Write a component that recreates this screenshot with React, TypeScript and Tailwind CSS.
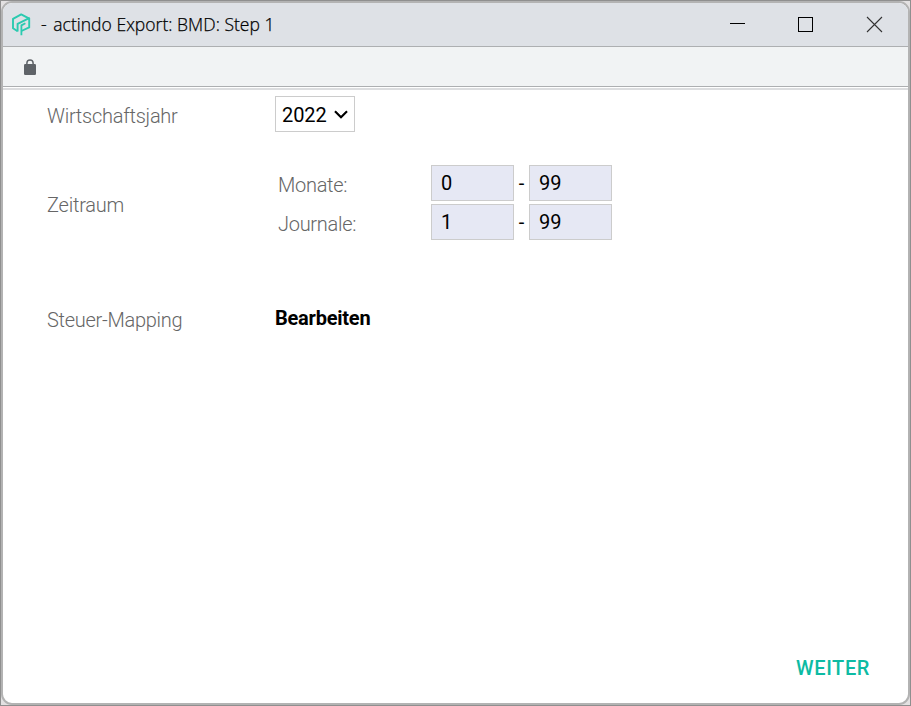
import React from "react";

function Logo() {
  return (
    <svg className="h-[24px] w-[20px] shrink-0" viewBox="0 0 20 24" fill="none" stroke="#2bcab0" strokeWidth="1.9" strokeLinejoin="round">
      <path d="M6.6 18.2 L2 15.2 V5.8 L10.2 1.4 L17.8 5.4" />
      <path d="M6.6 18.4 V10.8 L18.2 5.2 V14.4 L10.4 18" />
      <path d="M10.4 22.2 V12.4 L14.4 10.2" strokeWidth="1.8" />
    </svg>
  );
}

function TitleBar() {
  return (
    <div className="flex h-[44px] shrink-0 items-center border-b border-[#adafb1] bg-[#dee1e6] pl-[8px]">
      <Logo />
      <div className="ml-[10px] w-[260px] whitespace-nowrap font-['Open_Sans','Noto_Sans',sans-serif] text-[17.5px] font-light tracking-[0.03px] text-black [-webkit-text-stroke:0.25px_black]">
        <span className="mr-[2px]">-</span> actindo Export: BMD: Step 1
      </div>
      <svg className="ml-auto mr-[25px] h-[17px] w-[155px] shrink-0" viewBox="0 0 155 17" fill="none" shapeRendering="crispEdges">
        <path d="M2 7.5h15" stroke="#000" />
        <rect x="70.5" y="1.5" width="14" height="14" stroke="#000" />
        <path d="M139 1l15 15M154 1l-15 15" stroke="#333" strokeWidth="1.1" shapeRendering="auto" />
      </svg>
    </div>
  );
}

function LockBar() {
  return (
    <div className="flex h-[40px] shrink-0 items-center border-b border-[#adafb1] bg-[#f1f3f4] pl-[21px]">
      <svg className="h-[16px] w-[12px]" viewBox="0 0 12 16">
        <path d="M2.9 7V4a3.1 3.1 0 0 1 6.2 0v3" fill="none" stroke="#5f6368" strokeWidth="1.5" />
        <rect y="5" width="12" height="11" rx="1.3" fill="#5f6368" />
      </svg>
    </div>
  );
}

function Field({ value }: { value: string }) {
  return (
    <input
      className="h-[36px] w-[83px] border border-[#ccc] bg-[#e6e8f4] px-[9px] text-[20px] text-black outline-none"
      defaultValue={value}
    />
  );
}

function RangeRow({ label, from, to }: { label: string; from: string; to: string }) {
  return (
    <div className="flex h-[36px] items-center">
      <div className="w-[153px] pt-[4px] font-light tracking-[-0.28px] text-[#666]">{label}</div>
      <Field value={from} />
      <div className="w-[15px] pb-[1px] text-center text-black">-</div>
      <Field value={to} />
    </div>
  );
}

export default function App() {
  return (
    <div className="h-[706px] w-[911px] border border-[#8f8f8f] bg-[#e3e1e2]">
      <div className="flex h-[704px] flex-col overflow-hidden rounded-[11px] border-2 border-[#b3b3b3] bg-white">
        <TitleBar />
        <LockBar />
        <div className="mt-px h-[2px] shrink-0 bg-[#dcdddf]" />
        <main className="flex grow flex-col pl-[44px] font-['Roboto',sans-serif] text-[20px] leading-[24px]">
          <div className="mt-[6px] flex h-[36px] items-center">
            <div className="w-[228px] pt-[4px] font-light tracking-[-0.26px] text-[#666]">Wirtschaftsjahr</div>
            <button className="flex h-[36px] w-[80px] items-center border border-[#ccc] bg-white pl-[6px] text-black">
              <span className="pt-px tracking-[-0.1px]">2022</span>
              <svg className="ml-[7px] h-[9px] w-[14px]" viewBox="0 0 14 9">
                <path d="M1 1.2l6 6 6-6" fill="none" stroke="#000" strokeWidth="2.2" />
              </svg>
            </button>
          </div>
          <div className="mt-[33px] flex items-center">
            <div className="w-[231px] pt-[5px] font-light tracking-[-0.22px] text-[#666]">Zeitraum</div>
            <div className="flex flex-col gap-[3px]">
              <RangeRow label="Monate:" from="0" to="99" />
              <RangeRow label="Journale:" from="1" to="99" />
            </div>
          </div>
          <div className="mt-[66px] flex">
            <div className="w-[228px] pt-[2px] font-light tracking-[-0.28px] text-[#666]">Steuer-Mapping</div>
            <a className="font-bold tracking-[-0.23px] text-black">Bearbeiten</a>
          </div>
          <button className="mb-[23px] mr-[38px] mt-auto self-end font-medium tracking-[0.6px] text-[#0dbba3]">WEITER</button>
        </main>
      </div>
    </div>
  );
}
